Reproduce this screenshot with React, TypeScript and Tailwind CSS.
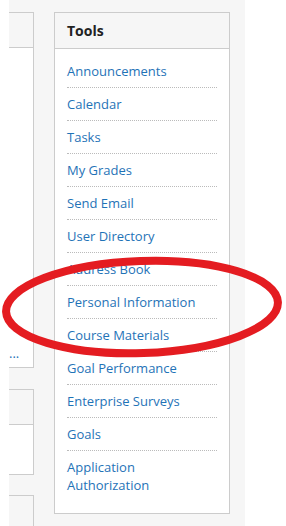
import React from "react";

const links = [
  "Announcements",
  "Calendar",
  "Tasks",
  "My Grades",
  "Send Email",
  "User Directory",
  "Address Book",
  "Personal Information",
  "Course Materials",
  "Goal Performance",
  "Enterprise Surveys",
  "Goals",
  "Application Authorization",
];

export default function App() {
  return (
    <div
      className="relative flex w-[286px] h-[526px] overflow-hidden bg-white"
      style={{ fontFamily: '"Open Sans", "Noto Sans", sans-serif' }}
    >
      <div className="w-[9px] shrink-0 bg-white" />
      <div className="flex w-[236px] shrink-0 bg-[#f6f6f6] pt-[12px]">
        {/* left column */}
        <div className="flex w-[25px] shrink-0 flex-col">
          <div className="flex h-[356px] shrink-0 flex-col border-y border-r border-[#cccccc]">
            <div className="h-[35px] shrink-0 border-b border-[#cccccc] bg-[#f6f6f6]" />
            <div className="flex flex-1 flex-col justify-end bg-white pb-[5px]">
              <span className="text-[13px] leading-[18px] text-[#1f73b7]">...</span>
            </div>
          </div>
          <div className="mt-[21px] flex h-[86px] shrink-0 flex-col border-y border-r border-[#cccccc]">
            <div className="h-[35px] shrink-0 border-b border-[#cccccc] bg-[#f6f6f6]" />
            <div className="flex-1 bg-white" />
          </div>
          <div className="mt-[20px] flex h-[60px] shrink-0 flex-col border-t border-r border-[#cccccc]">
            <div className="h-[35px] shrink-0 bg-[#f6f6f6]" />
          </div>
        </div>
        {/* tools panel */}
        <div className="ml-[20px] w-[176px] shrink-0 self-start border border-[#cccccc] bg-white">
          <div className="flex h-[36px] items-center border-b border-[#cccccc] bg-[#f6f6f6] px-[12px]">
            <span className="text-[14px] font-bold leading-[18px] text-[#222222]">Tools</span>
          </div>
          <ul className="pt-[6px] pb-[12px]">
            {links.map((l, i) => (
              <li
                key={l}
                className={
                  "mx-[12px] py-[7px] text-[13px] leading-[18px] text-[#1f73b7] " +
                  (i < links.length - 1 ? "border-b border-dotted border-[#bbbbbb]" : "")
                }
              >
                {l === "Application Authorization" ? (
                  <>
                    Application
                    <br />
                    Authorization
                  </>
                ) : (
                  l
                )}
              </li>
            ))}
          </ul>
        </div>
      </div>
      <svg
        className="pointer-events-none absolute left-0 top-0"
        width="286"
        height="526"
        viewBox="0 0 286 526"
      >
        <ellipse
          cx="142"
          cy="307"
          rx="136"
          ry="46"
          fill="none"
          stroke="#e41c21"
          strokeWidth="8"
          transform="rotate(-2 142 307)"
        />
      </svg>
    </div>
  );
}
